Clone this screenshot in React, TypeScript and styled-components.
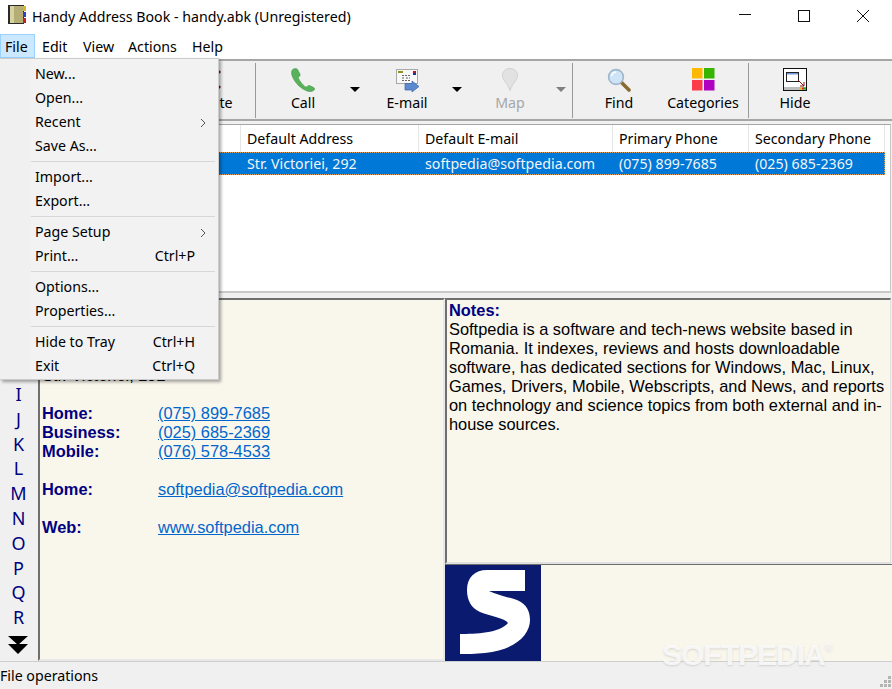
import styled, { createGlobalStyle } from "styled-components";

const GlobalStyle = createGlobalStyle`
  html, body {
    margin: 0;
    padding: 0;
    background: #f0f0f0;
    overflow: hidden;
  }
  * {
    box-sizing: border-box;
  }
`;

const uiFont = `"Noto Sans", "Open Sans", sans-serif`;
const paneFont = `"Liberation Sans", Arial, sans-serif`;

const menuTitles = [
  { label: "File", width: 35, open: true },
  { label: "Edit", width: 39 },
  { label: "View", width: 43 },
  { label: "Actions", width: 62 },
  { label: "Help", width: 40 },
];

const menuEntries: (null | { label: string; shortcut?: string; sub?: boolean })[] = [
  { label: "New..." },
  { label: "Open..." },
  { label: "Recent", sub: true },
  { label: "Save As..." },
  null,
  { label: "Import..." },
  { label: "Export..." },
  null,
  { label: "Page Setup", sub: true },
  { label: "Print...", shortcut: "Ctrl+P" },
  null,
  { label: "Options..." },
  { label: "Properties..." },
  null,
  { label: "Hide to Tray", shortcut: "Ctrl+H" },
  { label: "Exit", shortcut: "Ctrl+Q" },
];

const columns = [
  { title: "", value: "", width: 241 },
  { title: "Default Address", value: "Str. Victoriei, 292", width: 178 },
  { title: "Default E-mail", value: "softpedia@softpedia.com", width: 194 },
  { title: "Primary Phone", value: "(075) 899-7685", width: 136 },
  { title: "Secondary Phone", value: "(025) 685-2369", width: 136 },
];

const letters = "IJKLMNOPQR".split("");

const contactRows = [
  { label: "Home:", value: "(075) 899-7685" },
  { label: "Business:", value: "(025) 685-2369" },
  { label: "Mobile:", value: "(076) 578-4533" },
  null,
  { label: "Home:", value: "softpedia@softpedia.com" },
  null,
  { label: "Web:", value: "www.softpedia.com" },
];

const BookIcon = () => (
  <svg width="18" height="19" viewBox="0 0 18 19">
    <rect x="0" y="0" width="16" height="19" fill="#2a2a2a" />
    <rect x="2" y="1" width="13" height="17" fill="#b4ae74" />
    <rect x="2" y="1" width="4" height="17" fill="#d6d2a2" />
    <rect x="15" y="1" width="3" height="5" fill="#d8b820" />
    <rect x="15" y="7" width="3" height="5" fill="#3040c0" />
    <rect x="15" y="13" width="3" height="5" fill="#c02030" />
  </svg>
);

const PhoneIcon = () => (
  <svg width="24" height="24" viewBox="0 0 24 24">
    <path
      d="M1.6 1.5 C0 3 0.2 6.5 2 10 C4.8 15.5 9.5 20.5 16 23 C19 24 22 23.6 23.4 21.8 C24 20.8 23.5 20 22.7 19.6 L18.7 17.6 C17.8 17.2 17 17.5 16.4 18.3 C15.8 19.2 14.8 19.2 13.9 18.5 C11.3 16.3 9 13.5 7.7 10.7 C7.2 9.7 7.5 8.9 8.4 8.3 C9.2 7.8 9.4 7 9 6.2 L6.8 1.7 C6 0.3 3.2 0.2 1.6 1.5 Z"
      fill="#58b25c"
      stroke="#3f9347"
      strokeWidth="0.5"
    />
  </svg>
);

const MailIcon = () => (
  <svg width="24" height="24" viewBox="0 0 24 24">
    <rect x="1.5" y="1.5" width="21" height="14" fill="#f8f8f8" stroke="#a8a8a8" />
    <rect x="3" y="3" width="5" height="2" fill="#8f8f20" />
    <rect x="18" y="3" width="3" height="2" fill="#c01030" />
    <rect x="18" y="5" width="3" height="2" fill="#1d2f9a" />
    <path d="M7 7.5h8M7 10h3M11 10h4M7 12.5h8" stroke="#666" strokeDasharray="2 1" />
    <path d="M10 15.5 H17 V13 L24 18.5 L17 24 V22 H10 Z" fill="#5c8ad0" stroke="#3a64a8" strokeWidth="0.7" />
  </svg>
);

const PinIcon = () => (
  <svg width="16" height="23" viewBox="0 0 16 23">
    <path
      d="M8 0.5 C3.5 0.5 0.5 3.6 0.5 7.5 C0.5 12 5.5 15 8 22.5 C10.5 15 15.5 12 15.5 7.5 C15.5 3.6 12.5 0.5 8 0.5 Z"
      fill="#e2e2e2"
      stroke="#d0d0d0"
    />
  </svg>
);

const SearchIcon = () => (
  <svg width="24" height="24" viewBox="0 0 24 24">
    <path d="M14 14 L22 22" stroke="#8a6a30" strokeWidth="3.6" strokeLinecap="round" />
    <circle cx="9" cy="9" r="7.4" fill="#cfe4f7" stroke="#9db6cc" strokeWidth="1.6" />
    <path d="M4.5 8 A5 5 0 0 1 9 4" stroke="#fff" strokeWidth="1.4" fill="none" />
  </svg>
);

const GridIcon = () => (
  <svg width="23" height="23" viewBox="0 0 23 23">
    <rect x="0" y="0" width="10.5" height="10.5" fill="#fdb900" />
    <rect x="12" y="0" width="10.5" height="10.5" fill="#37b400" />
    <rect x="0" y="12" width="10.5" height="10.5" fill="#fb3b4a" />
    <rect x="12" y="12" width="10.5" height="10.5" fill="#b000c0" />
  </svg>
);

const HideIcon = () => (
  <svg width="24" height="23" viewBox="0 0 24 23">
    <rect x="0.5" y="0.5" width="23" height="22" fill="#fff" stroke="#111" />
    <rect x="1" y="19" width="22" height="3" fill="#bdbdbd" />
    <rect x="17" y="19.5" width="2" height="2" fill="#e8c000" />
    <rect x="19" y="19.5" width="2" height="2" fill="#e02020" />
    <rect x="21" y="19.5" width="2" height="2" fill="#20b020" />
    <rect x="3.5" y="4.5" width="12" height="9" fill="#fff" stroke="#222" />
    <rect x="4" y="5" width="11" height="1.5" fill="#6f9ae0" />
    <path d="M15 12 L21 18 M21 14 V18 H17" stroke="#8a1010" fill="none" />
  </svg>
);

const DeleteIcon = () => (
  <svg width="24" height="24" viewBox="0 0 24 24">
    <path d="M3 3 L21 20 M21 3 L3 20" stroke="#7a1010" strokeWidth="3" />
  </svg>
);

const LogoS = () => (
  <svg width="96" height="96" viewBox="0 0 96 96">
    <rect width="96" height="96" fill="#0a1a6e" />
    <path
      d="M80 5 V26 H44 C52 30 63 32 72 35 C82 39 85 47 85 55 C85 70 70 85 40 88 C30 89 22 89 15 89 V69 C30 69 55 68 63 58 C60 53 45 51 35 47 C26 43 22 35 22 25 C22 12 30 5 42 5 Z"
      fill="#fff"
    />
  </svg>
);

const DoubleArrow = () => (
  <svg width="20" height="18" viewBox="0 0 20 18">
    <path d="M0 0 H20 L10 9 Z M0 8 H20 L10 18 Z" fill="#000" />
  </svg>
);

export default function App() {
  return (
    <Window>
      <GlobalStyle />
      <TitleBar>
        <AppIcon>
          <BookIcon />
        </AppIcon>
        <TitleText>Handy Address Book - handy.abk (Unregistered)</TitleText>
        <WindowControls>
          <WindowButton>
            <svg width="12" height="12" viewBox="0 0 12 12">
              <path d="M0 4.5 H12" stroke="#111" />
            </svg>
          </WindowButton>
          <WindowButton>
            <svg width="12" height="12" viewBox="0 0 12 12">
              <rect x="0.5" y="0.5" width="11" height="11" fill="none" stroke="#111" />
            </svg>
          </WindowButton>
          <WindowButton>
            <svg width="12" height="12" viewBox="0 0 12 12">
              <path d="M0 0 L12 12 M12 0 L0 12" stroke="#111" />
            </svg>
          </WindowButton>
        </WindowControls>
      </TitleBar>

      <MenuBar>
        {menuTitles.map(item => (
          <MenuTitle key={item.label} $open={item.open} $width={item.width}>
            {item.label}
          </MenuTitle>
        ))}
      </MenuBar>

      <Toolbar>
        <ToolGroup $width={255}>
          <ToolButton $width={88}>
            <IconSlot>
              <DeleteIcon />
            </IconSlot>
            <ToolLabel>Delete</ToolLabel>
          </ToolButton>
        </ToolGroup>
        <ToolSeparator />
        <ToolButton $width={94}>
          <IconSlot>
            <PhoneIcon />
          </IconSlot>
          <ToolLabel>Call</ToolLabel>
        </ToolButton>
        <DropArrow />
        <ToolButton $width={86} $gap={4}>
          <IconSlot>
            <MailIcon />
          </IconSlot>
          <ToolLabel>E-mail</ToolLabel>
        </ToolButton>
        <DropArrow $gap={2} />
        <ToolButton $width={86} $gap={5}>
          <IconSlot>
            <PinIcon />
          </IconSlot>
          <ToolLabel $disabled>Map</ToolLabel>
        </ToolButton>
        <DropArrow $gap={3} $disabled />
        <ToolSeparator $gap={6} />
        <ToolButton $width={92}>
          <IconSlot>
            <SearchIcon />
          </IconSlot>
          <ToolLabel>Find</ToolLabel>
        </ToolButton>
        <ToolButton $width={76}>
          <IconSlot>
            <GridIcon />
          </IconSlot>
          <ToolLabel>Categories</ToolLabel>
        </ToolButton>
        <ToolSeparator $gap={7} />
        <ToolButton $width={92}>
          <IconSlot>
            <HideIcon />
          </IconSlot>
          <ToolLabel>Hide</ToolLabel>
        </ToolButton>
      </Toolbar>

      <ListView>
        <ListHeader>
          {columns.map(col => (
            <HeaderCell key={col.title} style={{ width: col.width }}>
              {col.title}
            </HeaderCell>
          ))}
        </ListHeader>
        <ListRow>
          {columns.map(col => (
            <RowCell key={col.title} style={{ width: col.width }}>
              {col.value}
            </RowCell>
          ))}
        </ListRow>
      </ListView>

      <Panes>
        <LetterBar>
          {letters.map(letter => (
            <Letter key={letter}>{letter}</Letter>
          ))}
          <ArrowSlot>
            <DoubleArrow />
          </ArrowSlot>
        </LetterBar>

        <DetailsPane>
          <AddressLine>Str. Victoriei, 292</AddressLine>
          <ContactTable>
            {contactRows.map((row, i) =>
              row ? (
                <ContactRow key={i}>
                  <ContactLabel>{row.label}</ContactLabel>
                  <ContactLink>{row.value}</ContactLink>
                </ContactRow>
              ) : (
                <ContactRow key={i} />
              )
            )}
          </ContactTable>
        </DetailsPane>

        <RightColumn>
          <NotesPane>
            <NotesTitle>Notes:</NotesTitle>
            Softpedia is a software and tech-news website based in Romania. It indexes, reviews and
            hosts downloadable software, has dedicated sections for Windows, Mac, Linux, Games,
            Drivers, Mobile, Webscripts, and News, and reports on technology and science topics from
            both external and in-house sources.
          </NotesPane>
          <LogoPane>
            <LogoS />
          </LogoPane>
        </RightColumn>
      </Panes>

      <StatusBar>
        File operations
        <Grip>
          <svg width="12" height="12" viewBox="0 0 12 12">
            <path
              d="M8 0h3v3H8zM4 4h3v3H4zM8 4h3v3H8zM0 8h3v3H0zM4 8h3v3H4zM8 8h3v3H8z"
              fill="#b4b4b4"
            />
          </svg>
        </Grip>
      </StatusBar>

      <Watermark>
        SOFTPEDIA<sup>®</sup>
      </Watermark>

      <DropMenu>
        {menuEntries.map((entry, i) =>
          entry ? (
            <MenuItem key={entry.label}>
              <span>{entry.label}</span>
              {entry.shortcut && <Shortcut>{entry.shortcut}</Shortcut>}
              {entry.sub && (
                <Chevron>
                  <svg width="6" height="10" viewBox="0 0 6 10">
                    <path d="M1 1 L5 5 L1 9" stroke="#555" fill="none" />
                  </svg>
                </Chevron>
              )}
            </MenuItem>
          ) : (
            <MenuDivider key={i} />
          )
        )}
      </DropMenu>
    </Window>
  );
}

const Window = styled.div`
  position: relative;
  width: 892px;
  height: 689px;
  overflow: hidden;
  display: flex;
  flex-direction: column;
  background: #f0f0f0;
  color: #000;
  font-family: ${uiFont};
  font-size: 14.2px;
`;

const TitleBar = styled.div`
  display: flex;
  align-items: center;
  height: 33px;
  flex: none;
  background: #fff;
  padding-left: 8px;
`;

const AppIcon = styled.div`
  display: flex;
  width: 24px;
  height: 19px;
  margin-top: -4px;
`;

const TitleText = styled.div`
  flex: 1;
  line-height: 32px;
`;

const WindowControls = styled.div`
  display: flex;
  height: 33px;
`;

const WindowButton = styled.div`
  display: flex;
  align-items: center;
  justify-content: center;
  width: 59px;
  height: 31px;
`;

const MenuBar = styled.div`
  display: flex;
  align-items: flex-start;
  height: 26px;
  flex: none;
  gap: 2px;
  background: #fff;
  padding-top: 1px;
`;

const MenuTitle = styled.div<{ $open?: boolean; $width: number }>`
  width: ${({ $width }) => $width}px;
  height: 24px;
  line-height: 24px;
  padding-left: 4px;
  border: 1px solid ${({ $open }) => ($open ? "#99d1ff" : "transparent")};
  background: ${({ $open }) => ($open ? "#cce8ff" : "transparent")};
`;

const Toolbar = styled.div`
  display: flex;
  align-items: stretch;
  height: 62px;
  flex: none;
  padding: 2px 0 1px;
  background: #f0f0f0;
  border-top: 2px solid #a6a6a6;
  border-bottom: 2px solid #a6a6a6;
`;

const ToolGroup = styled.div<{ $width: number }>`
  display: flex;
  justify-content: flex-end;
  width: ${({ $width }) => $width}px;
  flex: none;
`;

const ToolButton = styled.div<{ $width: number; $gap?: number }>`
  display: flex;
  flex-direction: column;
  align-items: center;
  width: ${({ $width }) => $width}px;
  margin-left: ${({ $gap }) => $gap || 0}px;
  padding-top: 5px;
  flex: none;
`;

const IconSlot = styled.div`
  display: flex;
  justify-content: center;
  height: 24px;
  flex: none;
`;

const ToolLabel = styled.div<{ $disabled?: boolean }>`
  margin-top: 1px;
  line-height: 20px;
  color: ${({ $disabled }) => ($disabled ? "#a6a6a6" : "#000")};
`;

const ToolSeparator = styled.div<{ $gap?: number }>`
  width: 1px;
  margin-left: ${({ $gap }) => $gap || 0}px;
  background: #999;
  flex: none;
`;

const DropArrow = styled.div<{ $disabled?: boolean; $gap?: number }>`
  width: 0;
  height: 0;
  margin: 24px 0 0 ${({ $gap }) => $gap || 0}px;
  border-left: 5px solid transparent;
  border-right: 5px solid transparent;
  border-top: 5px solid ${({ $disabled }) => ($disabled ? "#808080" : "#000")};
  flex: none;
`;

const ListView = styled.div`
  height: 169px;
  flex: none;
  margin: 3px 1px 0 0;
  border-top: 1px solid #a6a6a6;
  border-right: 1px solid #c8c8c8;
  border-bottom: 2px solid #c8c8c8;
  background: #fff;
`;

const ListHeader = styled.div`
  display: flex;
  height: 27px;
`;

const HeaderCell = styled.div`
  flex: none;
  padding-left: 6px;
  line-height: 27px;
  border-right: 1px solid #e5e5e5;
  white-space: nowrap;
`;

const ListRow = styled.div`
  display: flex;
  width: 885px;
  height: 23px;
  background: #0078d7;
  outline: 1px dotted #e0a060;
  outline-offset: -1px;
  color: #f4f4f4;
`;

const RowCell = styled.div`
  flex: none;
  padding-left: 6px;
  line-height: 23px;
  white-space: nowrap;
`;

const Panes = styled.div`
  display: flex;
  height: 363px;
  flex: none;
  margin-top: 5px;
`;

const LetterBar = styled.div`
  width: 38px;
  flex: none;
  display: flex;
  flex-direction: column;
  justify-content: flex-end;
  align-items: center;
  padding-bottom: 7px;
`;

const Letter = styled.div`
  height: 24.8px;
  line-height: 25px;
  flex: none;
  font-size: 18px;
  padding-right: 1px;
  color: #000080;
`;

const ArrowSlot = styled.div`
  display: flex;
  height: 18px;
  flex: none;
  margin-top: 6px;
  padding-right: 3px;
`;

const DetailsPane = styled.div`
  width: 407px;
  flex: none;
  padding: 66px 0 0 2px;
  background: #f9f6ec;
  border-top: 2px solid #6f6f6f;
  border-left: 2px solid #6f6f6f;
  border-right: 2px solid #e8e8e8;
  border-bottom: 2px solid #e8e8e8;
  font-family: ${paneFont};
  font-size: 16.4px;
  line-height: 19px;
`;

const AddressLine = styled.div`
  height: 19px;
  margin-bottom: 19px;
`;

const ContactTable = styled.div`
  display: flex;
  flex-direction: column;
`;

const ContactRow = styled.div`
  display: flex;
  height: 19px;
`;

const ContactLabel = styled.div`
  width: 116px;
  font-weight: 700;
  color: #000080;
`;

const ContactLink = styled.div`
  color: #0066cc;
  text-decoration: underline;
`;

const RightColumn = styled.div`
  flex: 1;
  display: flex;
  flex-direction: column;
`;

const NotesPane = styled.div`
  height: 266px;
  flex: none;
  margin-right: 1px;
  padding: 1px 0 0 2px;
  background: #f9f6ec;
  border-top: 2px solid #6f6f6f;
  border-left: 2px solid #6f6f6f;
  border-right: 1px solid #e0e0e0;
  border-bottom: 2px solid #e0e0e0;
  font-family: ${paneFont};
  font-size: 16.4px;
  line-height: 19px;
`;

const NotesTitle = styled.div`
  font-weight: 700;
  color: #000080;
`;

const LogoPane = styled.div`
  flex: 1;
  display: flex;
  background: #f9f6ec;
  border-top: 1px solid #6f6f6f;
`;

const StatusBar = styled.div`
  position: relative;
  flex: 1;
  display: flex;
  align-items: center;
  background: #f0f0f0;
  border-top: 1px solid #cfcfcf;
`;

const Grip = styled.div`
  position: absolute;
  right: 0;
  bottom: 1px;
  display: flex;
`;

const Watermark = styled.div`
  position: absolute;
  left: 662px;
  top: 637px;
  font-family: ${paneFont};
  font-size: 30px;
  font-weight: 700;
  line-height: 36px;
  color: rgba(255, 255, 255, 0.8);
  text-shadow: 0 1px 2px rgba(180, 180, 180, 0.5);
  letter-spacing: -1px;

  sup {
    font-size: 10px;
    vertical-align: 14px;
    line-height: 0;
  }
`;

const DropMenu = styled.div`
  position: absolute;
  left: 0;
  top: 58px;
  width: 219px;
  height: 322px;
  padding: 3px 3px 2px 0;
  background: linear-gradient(90deg, #f0f0f0 31px, #f2f2f2 31px);
  border: 1px solid #cccccc;
  border-left: none;
  box-shadow: 2px 2px 3px rgba(0, 0, 0, 0.35);
`;

const MenuItem = styled.div`
  position: relative;
  display: flex;
  justify-content: space-between;
  height: 24px;
  line-height: 24px;
  padding: 0 20px 0 35px;
`;

const Shortcut = styled.span``;

const Chevron = styled.span`
  position: absolute;
  right: 9px;
  top: 1px;
`;

const MenuDivider = styled.div`
  height: 1px;
  margin: 3px 0 3px 31px;
  background: #d7d7d7;
`;
